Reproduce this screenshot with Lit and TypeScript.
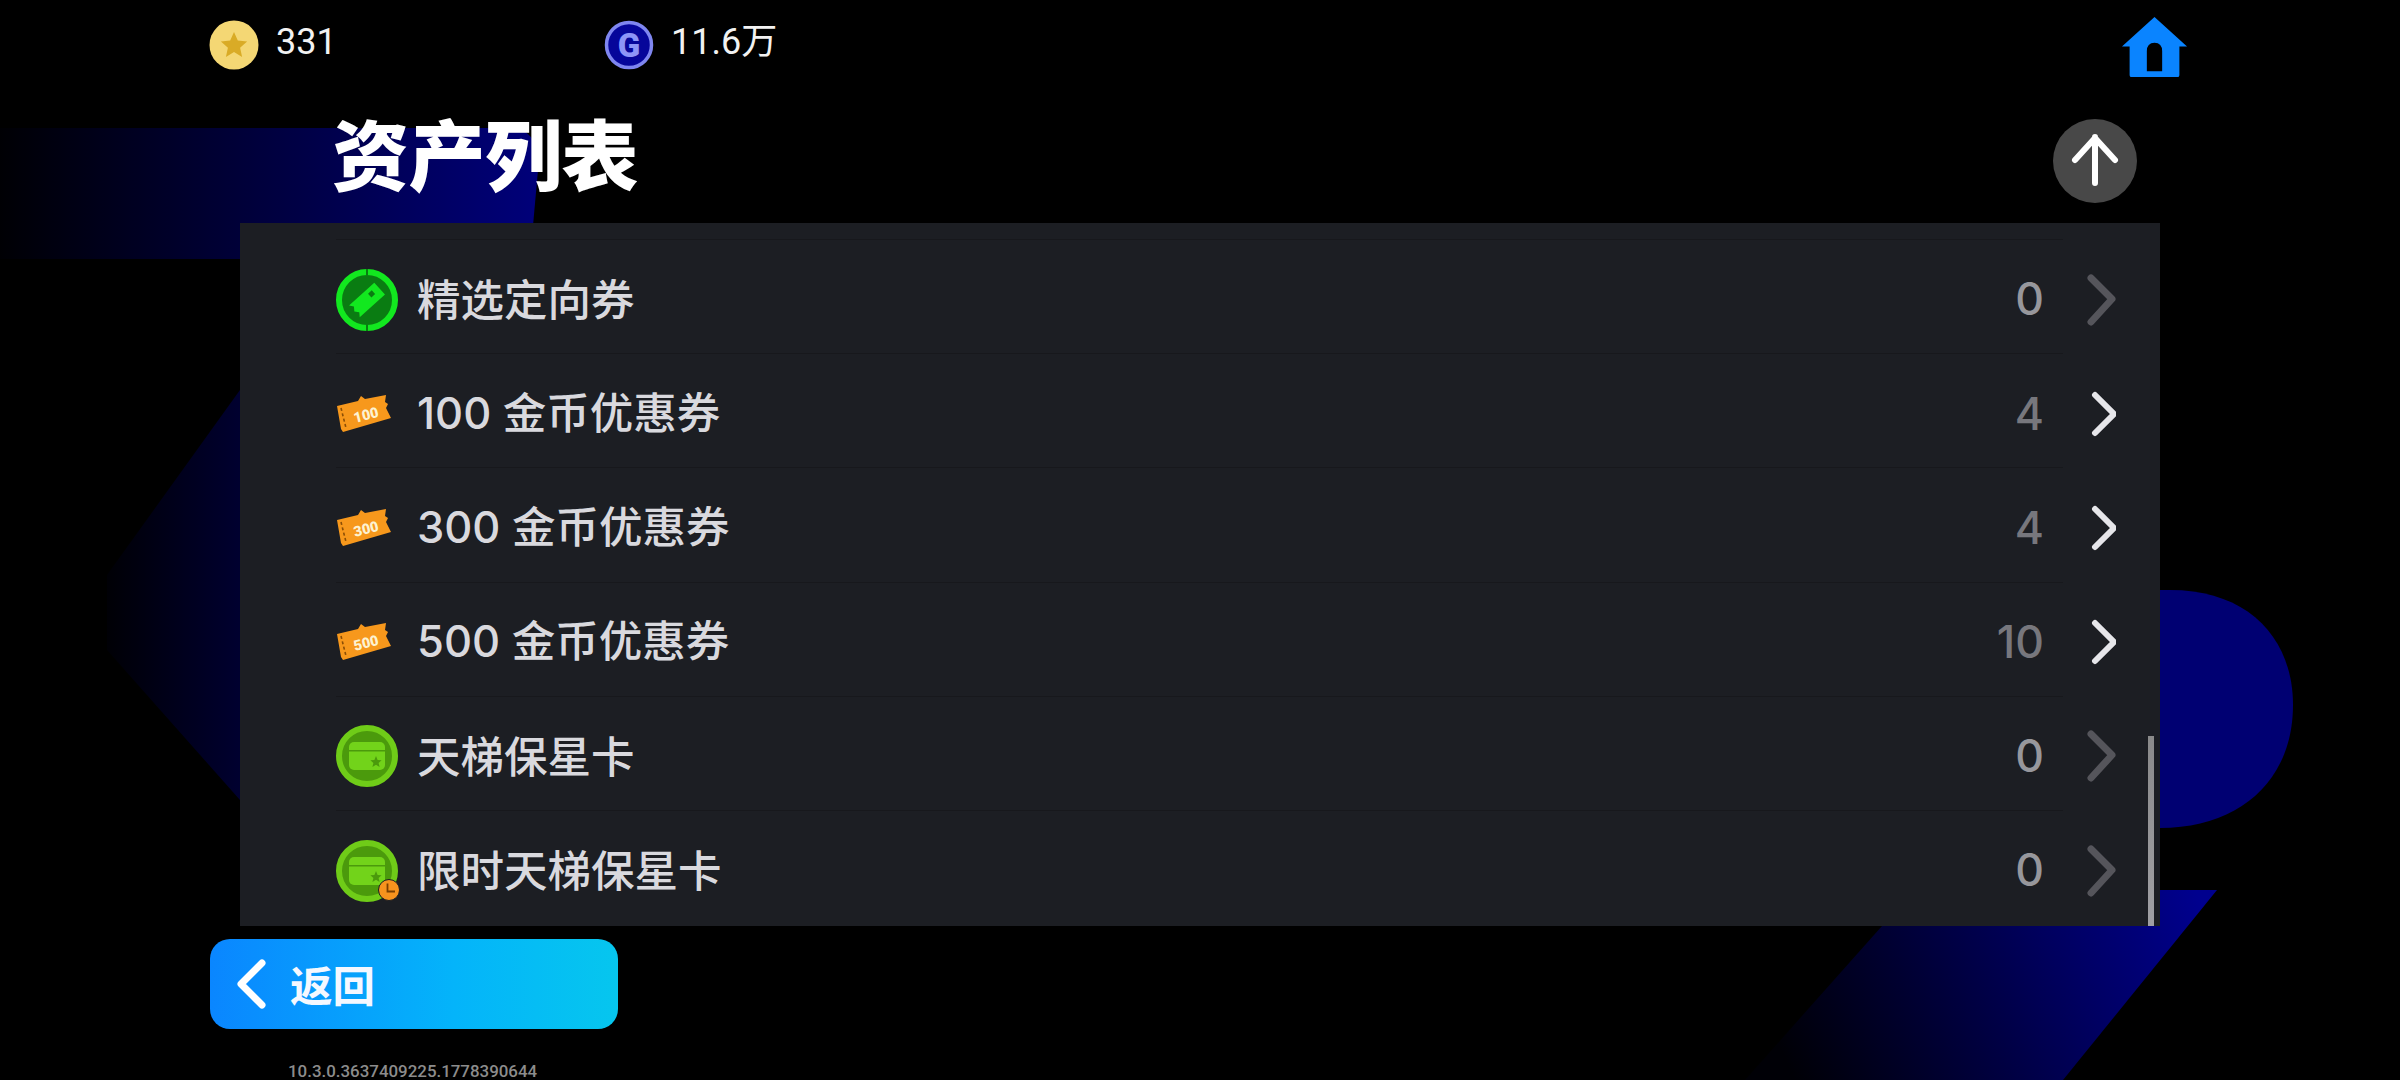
import { LitElement, html, css, svg } from "lit";
import { customElement } from "lit/decorators.js";

type Row = { icon: "target" | "coupon" | "card" | "cardTime"; amount?: string; label: string; count: string };

const ROWS: Row[] = [
  { icon: "target", label: "精选定向券", count: "0" },
  { icon: "coupon", amount: "100", label: "100 金币优惠券", count: "4" },
  { icon: "coupon", amount: "300", label: "300 金币优惠券", count: "4" },
  { icon: "coupon", amount: "500", label: "500 金币优惠券", count: "10" },
  { icon: "card", label: "天梯保星卡", count: "0" },
  { icon: "cardTime", label: "限时天梯保星卡", count: "0" },
];

const targetIcon = () => html`<svg class="icon" viewBox="0 0 62 62">
  <circle cx="31" cy="31" r="28" fill="#0a7c12" stroke="#12e81f" stroke-width="6"></circle>
  <rect x="30" y="0" width="2" height="6" fill="#0a7c12"></rect>
  <rect x="30" y="56" width="2" height="6" fill="#0a7c12"></rect>
  <g transform="rotate(-42 31 31)">
    <path d="M14 23 H48 V39 H14 L17 35 L14 31 L17 27 Z" fill="#12e81f"></path>
    <path d="M36 27 h5 v5 h-5 Z" fill="#0a7c12"></path>
  </g>
</svg>`;

const couponIcon = (amount: string) => html`<svg class="icon coupon" viewBox="0 0 56 40">
  <path d="M1 12 L22 7 L25 2 L29 5 L50 1 L49 8 L52 10 L50 14 L55 24 L7 38 L5 35 Z" fill="#f7981c"></path>
  <path d="M5 14 L10 34" stroke="#8a4d05" stroke-width="1.6" stroke-dasharray="3 2.5" fill="none"></path>
  <text class="amt" x="30" y="26" text-anchor="middle" transform="rotate(-14 30 21)">${amount}</text>
</svg>`;

const cardIcon = (clock: boolean) => html`<svg class="icon" viewBox="0 0 62 62">
  <circle cx="31" cy="31" r="28" fill="#4b9a0c" stroke="#6fcc18" stroke-width="6"></circle>
  <rect x="13" y="17" width="36" height="28" rx="5" fill="#72d31a"></rect>
  <rect x="13" y="25" width="36" height="1.500" fill="#4b9a0c"></rect>
  <path d="M40 31 l1.6 4 l4 .3 l-3 2.6 l1 4 l-3.6 -2.2 l-3.6 2.2 l1 -4 l-3 -2.6 l4 -.3 Z" fill="#4b9a0c"></path>
  ${clock
    ? svg`<circle cx="53" cy="50" r="10.500" fill="#f7931e" stroke="#1c1e23" stroke-width="1"></circle>
          <path d="M51.500 43.500 V51.500 H59" fill="none" stroke="#7a3f00" stroke-width="1.800"></path>`
    : ""}
</svg>`;

@customElement("app-root")
export class AppRoot extends LitElement {
  static styles = css`
    :host {
      display: block;
      position: relative;
      width: 2400px;
      height: 1080px;
      overflow: hidden;
      background: #000;
      font-family: "Noto Sans CJK SC", "Noto Sans", sans-serif;
      color: #fff;
    }
    .bg { position: absolute; inset: 0; width: 2400px; height: 1080px; }
    .page { position: relative; display: flex; flex-direction: column; height: 1080px; }

    .top { display: flex; align-items: center; height: 90px; padding-left: 209px; box-sizing: border-box; }
    .stat { display: flex; align-items: center; gap: 17px; font: 400 36px/1 Roboto, "Noto Sans CJK SC", sans-serif; color: #f2f2f2; }
    .stat span { margin-top: -6px; }
    .stat svg { width: 50px; height: 50px; display: block; }
    .stat.coins { width: 395px; }
    .g { font: 900 33px Roboto, sans-serif; fill: #8d95f7; }
    .home { margin-left: auto; margin-right: 212px; margin-top: 5px; width: 67px; height: 61px; display: block; }

    .head { display: flex; align-items: center; justify-content: space-between; height: 133px; padding: 0 263px 0 332px; box-sizing: border-box; }
    .title { font-size: 77px; font-weight: 900; line-height: 1; letter-spacing: -0.5px; margin-top: -11px; }
    .up { width: 84px; height: 84px; display: block; margin-top: 8px; }

    .panel { position: relative; margin-left: 240px; width: 1920px; height: 703px; background: #1c1e23; overflow: hidden; box-sizing: border-box; padding: 16px 0 0 96px; }
    .row { position: relative; display: flex; align-items: center; width: 1780px; height: 114.2px; padding-top: 7px; box-sizing: border-box; }
    .row::before { content: ""; position: absolute; left: 0; top: 0; width: 1727px; height: 1px; background: #17181c; }
    .icon { width: 62px; height: 62px; display: block; flex: none; overflow: visible; }
    .coupon { width: 56px; height: 40px; }
    .iconbox { width: 62px; display: flex; align-items: center; flex: none; }
    .amt { font: 900 14.5px Roboto, sans-serif; fill: #fdf2d0; }
    .label { margin: -4px 0 0 19px; flex: 1; font-size: 43.5px; line-height: 1; color: #d9d9de; font-weight: 500; white-space: pre; }
    .label.num { font-family: Inter, "Noto Sans CJK SC", sans-serif; margin-top: 0; }
    .count { font: 500 44.5px/1 Inter, sans-serif; color: #77777d; }
    .count.zero { color: #97979c; }
    .chev { width: 30px; height: 52px; margin-left: 42px; display: block; flex: none; }
    .chev path { fill: none; stroke: #e6e6ea; stroke-width: 6; stroke-linecap: round; stroke-linejoin: round; }
    .chev.dim path { stroke: #55555b; stroke-width: 7; }
    .thumb { position: absolute; left: 1908px; top: 513px; width: 6px; height: 190px; background: linear-gradient(#8a8a8a, #a0a0a4); }

    .foot { padding: 13px 0 0 210px; }
    .back { display: flex; align-items: center; width: 408px; height: 90px; border-radius: 20px; background: linear-gradient(90deg, #0a86ff, #04b4fa 60%, #06c6ee); box-sizing: border-box; padding-left: 26px; }
    .back svg { width: 32px; height: 50px; display: block; }
    .back span { margin-left: 22px; font-size: 42.5px; font-weight: 700; line-height: 1; color: #f5f8ff; }
    .ver { margin: 34px 0 0 78px; font: 500 16.9px/1 Roboto, sans-serif; color: #8c8c8c; }
  `;

  render() {
    return html`
      <svg class="bg" viewBox="0 0 2400 1080">
        <defs>
          <linearGradient id="l" gradientUnits="userSpaceOnUse" x1="0" y1="0" x2="540" y2="0">
            <stop offset="0" stop-color="#000004"></stop>
            <stop offset="1" stop-color="#00007a"></stop>
          </linearGradient>
          <linearGradient id="s" gradientUnits="userSpaceOnUse" x1="90" y1="0" x2="260" y2="0">
            <stop offset="0" stop-color="#000000"></stop>
            <stop offset="1" stop-color="#000036"></stop>
          </linearGradient>
          <linearGradient id="r" gradientUnits="userSpaceOnUse" x1="1800" y1="1090" x2="2200" y2="900">
            <stop offset="0" stop-color="#000006"></stop>
            <stop offset="1" stop-color="#00008e"></stop>
          </linearGradient>
        </defs>
        <path d="M0 128 H510 Q540 128 538 170 L530 259 H0 Z" fill="url(#l)"></path>
        <path d="M240 390 L107 575 V650 L240 800 Z" fill="url(#s)"></path>
        <path d="M1900 590 H2170 C2250 590 2293 640 2293 705 C2293 780 2240 828 2160 828 H1900 Z" fill="#000072"></path>
        <path d="M1882 926 L1745 1080 H2063 L2217 890 H1960 Z" fill="url(#r)"></path>
      </svg>
      <div class="page">
        <div class="top">
          <div class="stat coins">
            <svg viewBox="0 0 50 50">
              <circle cx="25" cy="25" r="24.500" fill="#f4d774"></circle>
              <path d="M25 12 l3.800 8.600 l9.300 .9 l-7 6.200 l2 9.200 l-8.100 -4.800 l-8.100 4.800 l2 -9.200 l-7 -6.200 l9.300 -.9 Z" fill="#d9ab26"></path>
            </svg>
            <span>331</span>
          </div>
          <div class="stat gems">
            <svg viewBox="0 0 50 50">
              <circle cx="25" cy="25" r="22.500" fill="#06069a" stroke="#7f86f0" stroke-width="3.500"></circle>
              <text class="g" x="25" y="37" text-anchor="middle">G</text>
            </svg>
            <span>11.6万</span>
          </div>
          <svg class="home" viewBox="0 0 70 64" preserveAspectRatio="none">
            <path fill-rule="evenodd" d="M35 0 L69 31 H61 V61 Q61 63 59 63 H11 Q9 63 9 61 V31 H1 Z M27 57 H43 V36 Q43 27 35 27 Q27 27 27 36 Z" fill="#0a84ff"></path>
          </svg>
        </div>
        <div class="head">
          <div class="title">资产列表</div>
          <svg class="up" viewBox="0 0 84 84">
            <circle cx="42" cy="42" r="42" fill="#484848"></circle>
            <path d="M42 64 V18 M22 41 L42 19 L62 41" fill="none" stroke="#fff" stroke-width="6" stroke-linecap="round" stroke-linejoin="round"></path>
          </svg>
        </div>
        <div class="panel">
          ${ROWS.map((r) => {
            const zero = r.count === "0";
            const num = !!r.amount;
            return html`<div class="row">
              <div class="iconbox">
                ${r.icon === "target"
                  ? targetIcon()
                  : r.icon === "coupon"
                  ? couponIcon(r.amount!)
                  : cardIcon(r.icon === "cardTime")}
              </div>
              <div class="label ${num ? "num" : ""}">${r.label}</div>
              <div class="count ${zero ? "zero" : ""}">${r.count}</div>
              <svg class="chev ${zero ? "dim" : ""}" viewBox="0 0 30 52">
                ${zero
                  ? svg`<path d="M5 4 L26 25 L5 48"></path>`
                  : svg`<path d="M9 7 L28 26 L9 45"></path>`}
              </svg>
            </div>`;
          })}
          <div class="thumb"></div>
        </div>
        <div class="foot">
          <div class="back">
            <svg viewBox="0 0 32 50">
              <path d="M26 4 L5 25 L26 46" fill="none" stroke="#fff" stroke-width="7" stroke-linecap="round" stroke-linejoin="round"></path>
            </svg>
            <span>返回</span>
          </div>
          <div class="ver">10.3.0.3637409225.1778390644</div>
        </div>
      </div>
    `;
  }
}
